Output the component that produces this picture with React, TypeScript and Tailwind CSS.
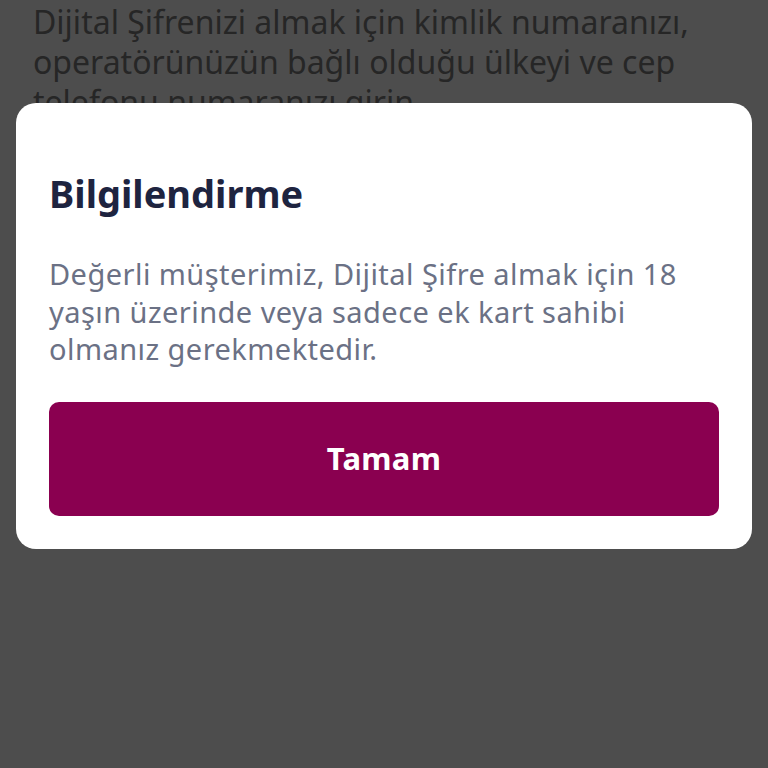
import React from "react";

export default function App() {
  return (
    <div
      className="relative w-[768px] h-[768px] overflow-hidden bg-[#4d4d4d]"
      style={{ fontFamily: "'Noto Sans', sans-serif" }}
    >
      <div className="px-[33px] pt-[2px] text-[32px] leading-[40px] text-[#262626]">
        Dijital Şifrenizi almak için kimlik numaranızı, operatörünüzün bağlı olduğu ülkeyi ve cep telefonu numaranızı girin.
      </div>

      <div className="absolute inset-0 px-[16px] pt-[103px]">
        <div className="bg-white rounded-[20px] px-[33px] pt-[66px] pb-[33px]">
          <h2 className="text-[38px] leading-[48px] font-bold text-[#1e2440]">
            Bilgilendirme
          </h2>
          <p className="mt-[38px] text-[29px] leading-[37.5px] tracking-[0.45px] text-[#6b7185]">
            Değerli müşterimiz, Dijital Şifre almak için 18 yaşın üzerinde veya sadece ek kart sahibi olmanız gerekmektedir.
          </p>
          <button className="mt-[34px] w-full h-[114px] rounded-[10px] bg-[#8a0050] text-white text-[31px] font-bold tracking-[0.3px]">
            Tamam
          </button>
        </div>
      </div>
    </div>
  );
}
